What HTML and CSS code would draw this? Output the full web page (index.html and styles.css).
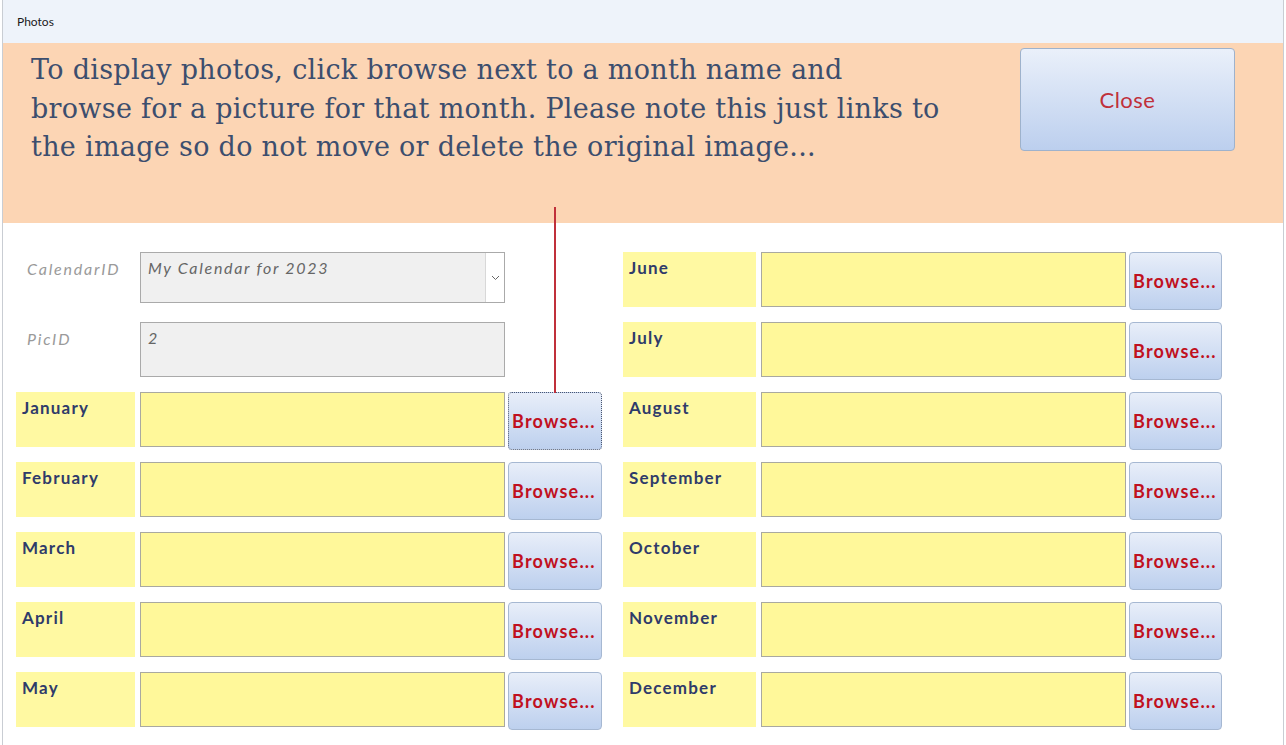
FILE: index.html
```html
<!DOCTYPE html>
<html>
<head>
<meta charset="utf-8">
<link rel="stylesheet" href="styles.css">
</head>
<body>
<div class="window">
  <div class="titlebar">Photos</div>
  <div class="header">
    <p class="intro">To display photos, click browse next to a month name and<br>browse for a picture for that month. Please note this just links to<br>the image so do not move or delete the original image...</p>
    <button class="close">Close</button>
  </div>
  <div class="content">
    <div class="col left">
      <div class="row">
        <div class="lbl plain">CalendarID</div>
        <div class="field grey combo"><span>My Calendar for 2023</span><span class="arrow"><svg width="9" height="6" viewBox="0 0 9 6"><path d="M1 1 L4.5 4.5 L8 1" fill="none" stroke="#666" stroke-width="1"/></svg></span></div>
      </div>
      <div class="row">
        <div class="lbl plain">PicID</div>
        <div class="field grey"><span>2</span></div>
      </div>
      <div class="row"><div class="lbl">January</div><div class="field"></div><button class="browse focus">Browse...</button></div>
      <div class="row"><div class="lbl">February</div><div class="field"></div><button class="browse">Browse...</button></div>
      <div class="row"><div class="lbl">March</div><div class="field"></div><button class="browse">Browse...</button></div>
      <div class="row"><div class="lbl">April</div><div class="field"></div><button class="browse">Browse...</button></div>
      <div class="row"><div class="lbl">May</div><div class="field"></div><button class="browse">Browse...</button></div>
    </div>
    <div class="col right">
      <div class="row"><div class="lbl">June</div><div class="field"></div><button class="browse">Browse...</button></div>
      <div class="row"><div class="lbl">July</div><div class="field"></div><button class="browse">Browse...</button></div>
      <div class="row"><div class="lbl">August</div><div class="field"></div><button class="browse">Browse...</button></div>
      <div class="row"><div class="lbl">September</div><div class="field"></div><button class="browse">Browse...</button></div>
      <div class="row"><div class="lbl">October</div><div class="field"></div><button class="browse">Browse...</button></div>
      <div class="row"><div class="lbl">November</div><div class="field"></div><button class="browse">Browse...</button></div>
      <div class="row"><div class="lbl">December</div><div class="field"></div><button class="browse">Browse...</button></div>
    </div>
  </div>
  <div class="redline"></div>
</div>
</body>
</html>
```
FILE: styles.css
```css
html, body {
  margin: 0;
  padding: 0;
  background: #ffffff;
}
body {
  width: 1286px;
  height: 745px;
  overflow: hidden;
  font-family: "Lato", "Open Sans", sans-serif;
}
.window {
  position: relative;
  margin-left: 2px;
  width: 1280px;
  height: 745px;
  border-left: 1px solid #c9cdd3;
  border-right: 1px solid #c9cdd3;
  background: #ffffff;
}
.titlebar {
  height: 43px;
  background: #eef3fa;
  font-size: 12px;
  color: #1a1a1a;
  padding-left: 14px;
  line-height: 43px;
  box-sizing: border-box;
}
.header {
  height: 180px;
  background: #fcd5b4;
  display: flex;
  justify-content: space-between;
  align-items: flex-start;
  padding: 5px 48px 0 28px;
  box-sizing: border-box;
}
.intro {
  margin: 3px 0 0 0;
  white-space: nowrap;
  font-family: "DejaVu Serif", "Liberation Serif", serif;
  font-size: 27px;
  letter-spacing: 0.3px;
  line-height: 38.5px;
  color: #3c4e6e;
}
.close {
  width: 215px;
  height: 103px;
  border: 1px solid #9eb2cc;
  border-radius: 4px;
  background: linear-gradient(#eaf0fa, #bccfee);
  color: #c0303a;
  font-family: "Lato", "Open Sans", sans-serif;
  font-size: 22px;
  letter-spacing: 0.5px;
  padding: 0;
  margin: 0;
}
.content {
  display: flex;
  padding: 29px 0 0 13px;
  gap: 21px;
}
.col {
  display: flex;
  flex-direction: column;
  gap: 15px;
}
.row {
  display: flex;
  height: 55px;
  align-items: flex-start;
}
.lbl {
  height: 55px;
  box-sizing: border-box;
  background: #fff9a2;
  font-weight: bold;
  font-size: 17px;
  letter-spacing: 1.2px;
  color: #2f3b6a;
  padding: 5px 0 0 6px;
  margin-right: 5px;
}
.left .lbl { width: 119px; }
.right .lbl { width: 133px; }
.lbl.plain {
  background: transparent;
  font-weight: normal;
  font-style: italic;
  color: #9a9a9a;
  font-size: 16px;
  letter-spacing: 1.8px;
  padding: 7px 0 0 11px;
}
.field {
  width: 365px;
  height: 55px;
  box-sizing: border-box;
  background: #fff89a;
  border: 1px solid #a9a9a0;
  margin-right: 3px;
}
.field.grey {
  background: #f0f0f0;
  border: 1px solid #aaaaaa;
  font-style: italic;
  color: #666666;
  font-size: 16px;
  letter-spacing: 1.7px;
  padding: 5px 0 0 7px;
  position: relative;
}
.field.combo {
  height: 51px;
}
.arrow {
  position: absolute;
  right: 0;
  top: 0;
  width: 18px;
  height: 49px;
  background: #ffffff;
  border-left: 1px solid #d8d8d8;
  display: flex;
  align-items: center;
  justify-content: center;
}
.browse {
  width: 94px;
  height: 58px;
  margin: 0;
  padding: 0 0 0 3px;
  border: 1px solid #a6b8d2;
  border-radius: 4px;
  background: linear-gradient(#e8eef9, #bdd0ee);
  color: #c01020;
  font-family: "Lato", "Open Sans", sans-serif;
  font-weight: bold;
  font-size: 18px;
  letter-spacing: 1.2px;
  text-align: left;
  white-space: nowrap;
}
.right .browse { width: 93px; }
.browse.focus {
  border: 1px dotted #4a5670;
}
.redline {
  position: absolute;
  left: 551px;
  top: 207px;
  width: 2px;
  height: 186px;
  background: #c0303a;
}
```
